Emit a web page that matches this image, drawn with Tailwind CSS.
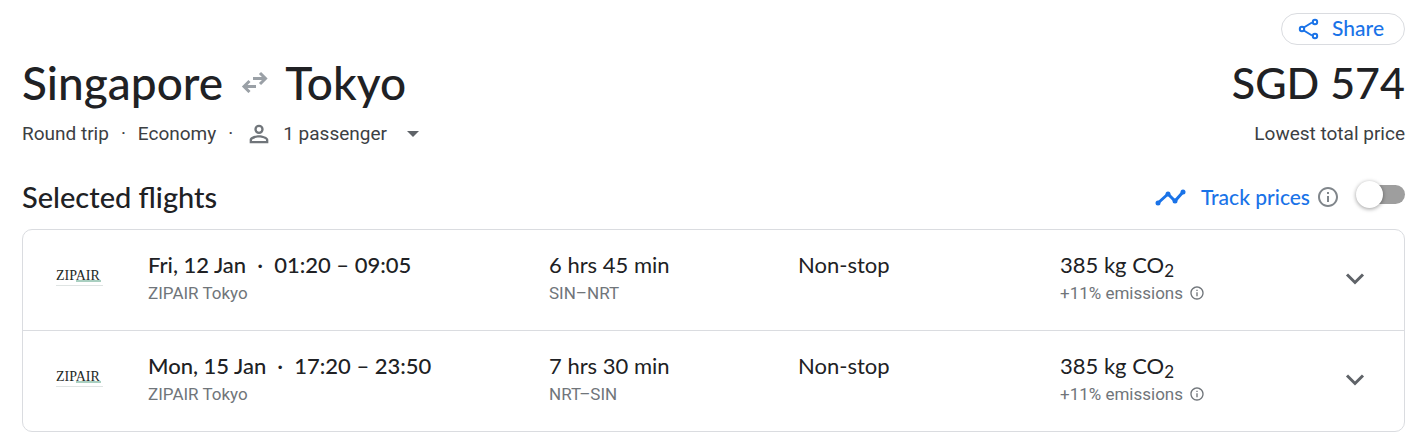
<!DOCTYPE html>
<html lang="en">
<head>
<meta charset="utf-8">
<meta name="viewport" content="width=device-width, initial-scale=1">
<title>Singapore to Tokyo</title>
<script src="https://cdn.jsdelivr.net/npm/@tailwindcss/browser@4"></script>
</head>
<body class="bg-white font-['Roboto',sans-serif] text-[#202124]">
<svg class="hidden" aria-hidden="true">
  <symbol id="info" viewBox="0 0 24 24"><path d="M11 7h2v2h-2zm0 4h2v6h-2zm1-9C6.48 2 2 6.48 2 12s4.48 10 10 10 10-4.48 10-10S17.52 2 12 2zm0 18c-4.41 0-8-3.59-8-8s3.59-8 8-8 8 3.59 8 8-3.59 8-8 8z"/></symbol>
  <symbol id="chevron" viewBox="0 0 28 28"><path d="m6 8.500 8 8 8-8" fill="none" stroke="currentColor" stroke-width="3"/></symbol>
  <symbol id="zipair" viewBox="0 0 48 20">
    <path d="M20 13h25v2H20z" fill="#a9cfc0"/>
    <text x="0" y="13" font-family="Liberation Serif, serif" font-size="14" fill="#1d2826">ZIPAIR</text>
    <path d="M0 18h47v1H0z" fill="#dfe4e3"/>
  </symbol>
</svg>
<main class="pt-[13px] pr-3 pb-2 pl-[22px]">
  <div class="flex justify-end">
    <button class="flex h-8 items-center gap-3 rounded-full border border-[#dadce0] pr-5 pl-4 pb-[2px] font-['Lato',sans-serif] text-[21px] font-medium text-[#1a73e8]">
      <svg class="mt-[2px] size-[22px]" viewBox="0 0 22 22" fill="none" stroke="currentColor" stroke-width="2" aria-hidden="true"><path d="m5 10 9-5.5M5 12l9 5.5"/><circle cx="4" cy="11" r="2.200"/><circle cx="17" cy="4" r="2.200"/><circle cx="17" cy="18" r="2.200"/></svg>
      Share
    </button>
  </div>
  <header class="flex items-start justify-between">
    <div>
      <h1 class="flex h-[76px] items-center gap-[17px] pb-[2px] font-['Lato',sans-serif] text-[46px] font-medium">
        Singapore
        <svg class="h-[22px] w-[28px] text-[#9aa0a6]" viewBox="0 0 28 22" fill="none" stroke="currentColor" stroke-width="3" role="img" aria-label="to and from"><path d="M13 7.500h13M20 2l5.500 5.500L20 13M16 15.500H4M9.500 10 4 15.500 9.500 21"/></svg>
        Tokyo
      </h1>
      <div class="mt-px flex h-6 items-center text-[19px] text-[#3c4043]">
        <span>Round trip</span><span class="mx-3">·</span><span>Economy</span><span class="mx-3">·</span>
        <button class="flex items-center">
          <svg class="size-7 text-[#70757a]" viewBox="0 0 24 24" fill="currentColor" aria-hidden="true"><path d="M12 4a4 4 0 1 0 0 8 4 4 0 0 0 0-8zm0 6a2 2 0 1 1 0-4 2 2 0 0 1 0 4zm0 3c-2.67 0-8 1.340-8 4v3h16v-3c0-2.660-5.330-4-8-4zm6 5H6v-.99c.2-.72 3.300-2.010 6-2.010s5.800 1.290 6 2z"/></svg>
          <span class="ml-[10px]">1 passenger</span>
          <svg class="ml-5 h-[6px] w-[12px]" viewBox="0 0 12 6" fill="#5f6368" aria-hidden="true"><path d="M0 0h12L6 6z"/></svg>
        </button>
      </div>
    </div>
    <div class="text-right">
      <p class="flex h-[76px] items-center justify-end font-['Lato',sans-serif] text-[43px] font-medium">SGD 574</p>
      <p class="mt-px h-6 text-[19px] leading-6 text-[#3c4043]">Lowest total price</p>
    </div>
  </header>
  <section>
    <div class="mt-6 flex h-[59px] items-center justify-between pb-[5px]">
      <h2 class="font-['Lato',sans-serif] text-[29px] font-medium">Selected flights</h2>
      <div class="flex items-center">
        <svg class="mr-[14px] h-5 w-8 text-[#1a73e8]" viewBox="0 0 32 20" fill="none" stroke="currentColor" stroke-width="3" aria-hidden="true"><path d="m3 16 10-9 7 7 8-9"/><g fill="currentColor" stroke="none"><circle cx="3" cy="16" r="2.500"/><circle cx="13" cy="7" r="2.500"/><circle cx="20" cy="14" r="2.500"/><circle cx="28" cy="5" r="2.500"/></g></svg>
        <label for="track" class="font-['Lato',sans-serif] text-[21px] font-medium text-[#1a73e8]">Track prices</label>
        <button class="ml-[6px]" aria-label="About price tracking"><svg class="size-6 fill-[#80868b]"><use href="#info"/></svg></button>
        <input id="track" type="checkbox" role="switch" class="mb-[6px] ml-5 h-[19px] w-[45px] appearance-none rounded-full bg-[#9e9e9e] before:-mt-1 before:-ml-1 before:block before:size-[27px] before:rounded-full before:bg-white before:shadow-[0_1px_4px_rgba(0,0,0,0.4)] checked:bg-[#8ab4f8]">
      </div>
    </div>
    <ul class="divide-y divide-[#dadce0] rounded-[10px] border border-[#dadce0]">
      <li class="box-content grid h-[100px] grid-cols-[125px_401fr_249fr_262fr_246fr_98px]">
        <svg class="mt-[37px] ml-[33px] h-5 w-12" role="img" aria-label="ZIPAIR"><use href="#zipair"/></svg>
        <div class="pt-[21px]">
          <p class="font-['Lato',sans-serif] text-[22px] leading-7 font-medium">Fri, 12 Jan &nbsp;·&nbsp; 01:20 – 09:05</p>
          <p class="text-[17px] leading-7 text-[#70757a]">ZIPAIR Tokyo</p>
        </div>
        <div class="pt-[21px]">
          <p class="font-['Lato',sans-serif] text-[22px] leading-7">6 hrs 45 min</p>
          <p class="text-[17px] leading-7 text-[#70757a]">SIN–NRT</p>
        </div>
        <p class="pt-[21px] font-['Lato',sans-serif] text-[22px] leading-7">Non-stop</p>
        <div class="pt-[21px]">
          <p class="font-['Lato',sans-serif] text-[22px] leading-7">385 kg CO<sub class="text-[17px]">2</sub></p>
          <p class="flex items-center gap-[6px] text-[17px] leading-7 text-[#70757a]">+11% emissions <button aria-label="About emissions"><svg class="size-4 fill-[#70757a]"><use href="#info"/></svg></button></p>
        </div>
        <button class="place-self-center" aria-label="Flight details"><svg class="size-7 text-[#5f6368]"><use href="#chevron"/></svg></button>
      </li>
      <li class="box-content grid h-[100px] grid-cols-[125px_401fr_249fr_262fr_246fr_98px]">
        <svg class="mt-[37px] ml-[33px] h-5 w-12" role="img" aria-label="ZIPAIR"><use href="#zipair"/></svg>
        <div class="pt-[21px]">
          <p class="font-['Lato',sans-serif] text-[22px] leading-7 font-medium">Mon, 15 Jan &nbsp;·&nbsp; 17:20 – 23:50</p>
          <p class="text-[17px] leading-7 text-[#70757a]">ZIPAIR Tokyo</p>
        </div>
        <div class="pt-[21px]">
          <p class="font-['Lato',sans-serif] text-[22px] leading-7">7 hrs 30 min</p>
          <p class="text-[17px] leading-7 text-[#70757a]">NRT–SIN</p>
        </div>
        <p class="pt-[21px] font-['Lato',sans-serif] text-[22px] leading-7">Non-stop</p>
        <div class="pt-[21px]">
          <p class="font-['Lato',sans-serif] text-[22px] leading-7">385 kg CO<sub class="text-[17px]">2</sub></p>
          <p class="flex items-center gap-[6px] text-[17px] leading-7 text-[#70757a]">+11% emissions <button aria-label="About emissions"><svg class="size-4 fill-[#70757a]"><use href="#info"/></svg></button></p>
        </div>
        <button class="place-self-center" aria-label="Flight details"><svg class="size-7 text-[#5f6368]"><use href="#chevron"/></svg></button>
      </li>
    </ul>
  </section>
</main>
</body>
</html>
